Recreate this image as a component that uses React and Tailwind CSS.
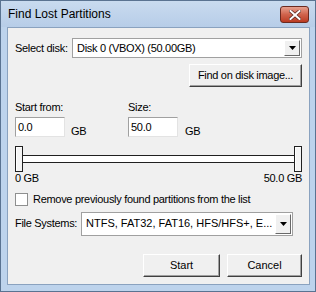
import React from 'react';

const font = { fontFamily: '"Liberation Sans", Arial, sans-serif' };

function Sunken({ className = '', children }) {
    return (
        <div className={`border border-t-[#a0a0a0] border-l-[#a0a0a0] border-r-[#e3e3e3] border-b-[#e3e3e3] bg-white ${className}`}>
            {children}
        </div>
    );
}

function ArrowButton() {
    return (
        <div className="w-[16px] h-full shrink-0 flex items-center justify-center bg-[#f0f0f0] border border-t-white border-l-white border-r-[#696969] border-b-[#696969]">
            <svg width="7" height="4" viewBox="0 0 7 4"><path d="M0 0h7L3.5 4z" fill="#000" /></svg>
        </div>
    );
}

function Combo({ value, className = '', textClass = '' }) {
    return (
        <div className={`flex items-stretch border border-[#a0a0a0] bg-white p-[1px] ${className}`}>
            <div className={`flex-1 flex items-center pl-[3px] text-black whitespace-nowrap overflow-hidden ${textClass}`}>{value}</div>
            <ArrowButton />
        </div>
    );
}

function Button({ children, className = '' }) {
    return (
        <div className={`h-[23px] flex items-center justify-center text-black bg-[#f0f0f0] border border-t-white border-l-white border-r-[#404040] border-b-[#404040] shadow-[inset_-1px_-1px_0_#a0a0a0] whitespace-nowrap ${className}`}>
            {children}
        </div>
    );
}

function Thumb() {
    return <div className="w-[8px] h-[26px] shrink-0 bg-[#f4f4f4] border border-[#202020] shadow-[inset_1px_1px_0_#fff]" />;
}

export default function App() {
    return (
        <div className="w-[316px] h-[292px] bg-[#bdd3ec] border border-[#5a7391] flex flex-col overflow-hidden" style={font}>
            <div className="h-[26px] shrink-0 flex items-center justify-between pl-[7px] pr-[6px] bg-gradient-to-b from-[#c9dbef] to-[#b7cde8]">
                <span className="text-[12px] text-black">Find Lost Partitions</span>
                <div className="w-[29px] h-[17px] mt-[1px] rounded-[3px] border border-[#6b2a20] bg-gradient-to-b from-[#e6a08f] via-[#d0634c] to-[#bb3b22] flex items-center justify-center">
                    <svg width="12" height="10" viewBox="0 0 12 10">
                        <path d="M1.5 1l9 8M10.5 1l-9 8" stroke="#5a2a20" strokeWidth="3.4" strokeLinecap="square" />
                        <path d="M1.5 1l9 8M10.5 1l-9 8" stroke="#fff" strokeWidth="2" strokeLinecap="square" />
                    </svg>
                </div>
            </div>
            <div className="ml-[6px] mr-[5px] h-[258px] shrink-0 bg-[#f0f0f0] border border-[#8aa2bf] text-[11px] tracking-[-0.3px] text-black pl-[7px] pr-[7px] whitespace-nowrap">
                <div className="flex items-center mt-[10px]">
                    <span className="w-[57px] shrink-0">Select disk:</span>
                    <Combo value="Disk 0 (VBOX) (50.00GB)" className="flex-1 h-[20px]" />
                </div>
                <div className="flex justify-end mt-[6px]">
                    <Button className="w-[113px]">Find on disk image...</Button>
                </div>
                <div className="flex mt-[12px]">
                    <div className="w-[113px]">
                        <div className="h-[16px] leading-[16px]">Start from:</div>
                        <div className="flex items-end mt-[2px]">
                            <Sunken className="w-[50px] h-[20px] flex items-center pl-[2px]">0.0</Sunken>
                            <span className="ml-[6px] mb-[-2px]">GB</span>
                        </div>
                    </div>
                    <div>
                        <div className="h-[16px] leading-[16px]">Size:</div>
                        <div className="flex items-end mt-[2px]">
                            <Sunken className="w-[50px] h-[20px] flex items-center pl-[2px]">50.0</Sunken>
                            <span className="ml-[7px] mb-[-2px]">GB</span>
                        </div>
                    </div>
                </div>
                <div className="flex items-center mt-[9px]">
                    <Thumb />
                    <div className="flex-1 h-[8px] bg-white border-y border-[#202020]" />
                    <Thumb />
                </div>
                <div className="flex justify-between leading-[14px] mt-[-1px]">
                    <span>0 GB</span>
                    <span>50.0 GB</span>
                </div>
                <div className="flex items-center mt-[6px]">
                    <div className="w-[13px] h-[13px] shrink-0 bg-white border border-[#8e8f8f]" />
                    <span className="ml-[5px]">Remove previously found partitions from the list</span>
                </div>
                <div className="flex items-center mt-[4px] pr-[9px]">
                    <span className="w-[66px] shrink-0">File Systems:</span>
                    <Combo value="NTFS, FAT32, FAT16, HFS/HFS+, E..." className="flex-1 h-[24px]" textClass="tracking-normal" />
                </div>
                <div className="flex justify-end mt-[18px] gap-[7px] tracking-normal">
                    <Button className="w-[77px]">Start</Button>
                    <Button className="w-[75px]">Cancel</Button>
                </div>
            </div>
        </div>
    );
}
